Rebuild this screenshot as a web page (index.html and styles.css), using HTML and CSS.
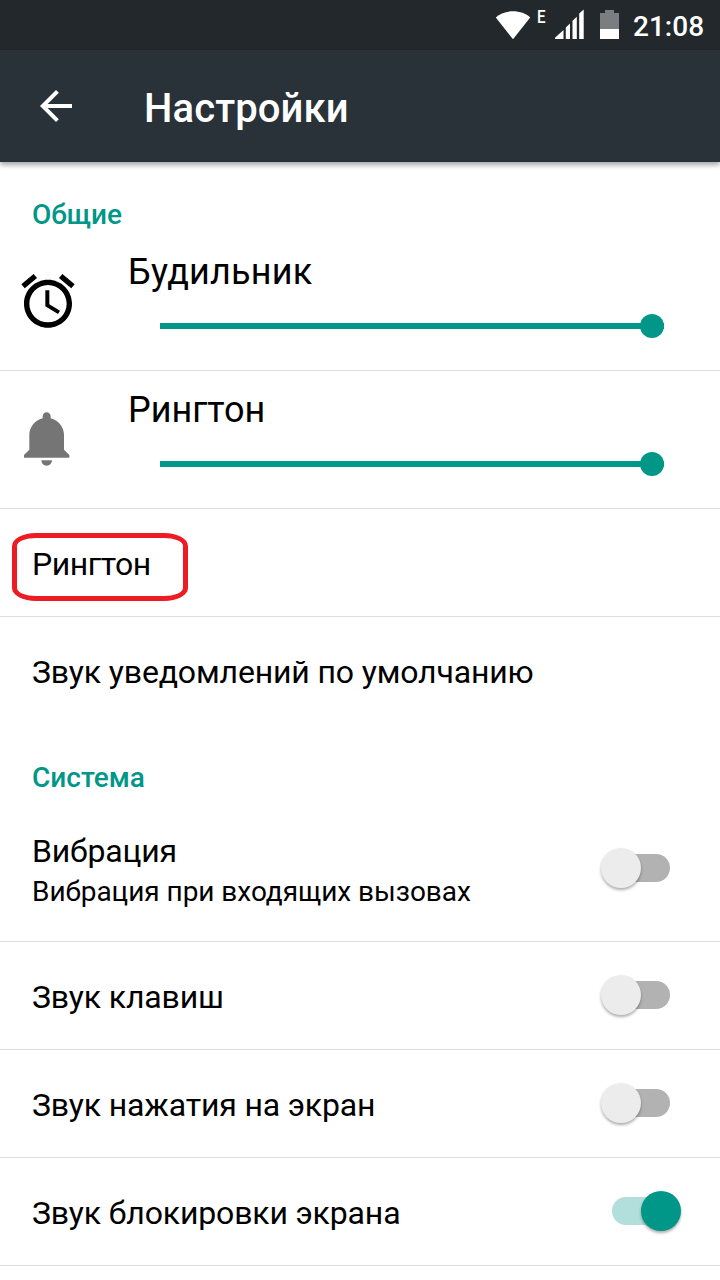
FILE: index.html
```html
<!DOCTYPE html>
<html lang="ru">
<head>
<meta charset="utf-8">
<title>Настройки</title>
<link rel="stylesheet" href="styles.css">
</head>
<body>
<div class="status-bar">
  <svg class="status-icons" viewBox="0 0 130 50" fill="#fff">
    <path d="M5.800 17.500C14 9.200 32 9.200 40.200 17.500L23 39.200Z"/>
    <path d="M65 39V37.800L73.500 30V39ZM75.800 39V27.500L80 23.500V39ZM82.500 39V20.800L86.800 16.800V39ZM89.200 39V13.500L93.700 9.500V39Z"/>
    <path d="M110 13H115V10H124V13H129V29H110Z" fill="#7b7e80"/>
    <path d="M110 29H129V39H110Z"/>
  </svg>
  <span class="network">E</span>
  <span class="clock">21:08</span>
</div>
<header class="app-bar">
  <svg class="back" viewBox="0 0 24 24"><path d="M20 11H7.830l5.590-5.590L12 4l-8 8 8 8 1.410-1.410L7.830 13H20v-2z"/></svg>
  <h1 class="title">Настройки</h1>
</header>
<main>
  <h2 class="section">Общие</h2>
  <div class="row volume">
    <svg class="volume-icon" viewBox="0 0 24 24"><path d="M22 5.720l-4.600-3.860-1.290 1.530 4.600 3.860L22 5.720zM7.880 3.390L6.600 1.860 2 5.710l1.290 1.530 4.590-3.850zM12.500 8H11v6l4.750 2.850.75-1.230-4-2.370V8zM12 4c-4.970 0-9 4.030-9 9s4.020 9 9 9c4.970 0 9-4.030 9-9s-4.030-9-9-9zm0 16c-3.870 0-7-3.130-7-7s3.130-7 7-7 7 3.130 7 7-3.130 7-7 7z"/></svg>
    <div class="volume-body"><div class="volume-name wide">Будильник</div><div class="slider"><i class="knob"></i></div></div>
  </div>
  <div class="row volume">
    <svg class="volume-icon muted" viewBox="0 0 24 24"><path d="M11.500 22c1.100 0 2-.9 2-2h-4c0 1.100.9 2 2 2zm6.500-6v-5.500c0-3.070-2.130-5.640-5-6.320V3.500c0-.83-.67-1.500-1.500-1.500S10 2.670 10 3.500v.68c-2.870.68-5 3.250-5 6.320V16l-2 2v1h17v-1l-2-2z"/></svg>
    <div class="volume-body"><div class="volume-name">Рингтон</div><div class="slider"><i class="knob"></i></div></div>
  </div>
  <div class="row item marked"><span class="label">Рингтон</span></div>
  <div class="row item last"><span class="label">Звук уведомлений по умолчанию</span></div>
  <h2 class="section system">Система</h2>
  <div class="row item detailed">
    <div class="texts"><div class="label">Вибрация</div><div class="hint">Вибрация при входящих вызовах</div></div>
    <div class="switch"><i class="thumb"></i></div>
  </div>
  <div class="row item"><span class="label">Звук клавиш</span><div class="switch"><i class="thumb"></i></div></div>
  <div class="row item"><span class="label">Звук нажатия на экран</span><div class="switch"><i class="thumb"></i></div></div>
  <div class="row item"><span class="label">Звук блокировки экрана</span><div class="switch on"><i class="thumb"></i></div></div>
</main>
</body>
</html>
```

FILE: styles.css
```css
*, *::after { box-sizing: border-box; }
body {
  margin: 0;
  height: 1280px;
  overflow: hidden;
  background: #fff;
  color: #000;
  font-family: Roboto, "Noto Sans", sans-serif;
}
h1, h2 { margin: 0; font-weight: 500; }
.status-bar {
  position: relative;
  display: flex;
  justify-content: flex-end;
  height: 50px;
  padding-right: 16px;
  background: #22282c;
  color: #fff;
}
.status-icons { width: 130px; height: 50px; margin-right: 13px; }
.network { position: absolute; left: 537px; top: 6px; font-size: 19px; font-weight: 500; line-height: 22px; transform: scaleX(.8); transform-origin: 0 0; }
.clock { width: 71px; font-size: 28px; font-weight: 500; line-height: 53px; text-align: right; white-space: nowrap; }
.app-bar {
  position: relative;
  display: flex;
  align-items: center;
  height: 112px;
  padding-left: 32px;
  background: #283238;
  color: #fff;
  box-shadow: 0 3px 5px rgba(0, 0, 0, .35);
}
.back { width: 48px; height: 48px; fill: #fff; }
.title { padding: 6px 0 0 64px; font-size: 40px; line-height: 48px; letter-spacing: .12px; }
.section {
  height: 71px;
  padding: 35px 32px 0;
  color: #009688;
  font-size: 28px;
  line-height: 36px;
}
.system { height: 88px; }
.row { display: flex; border-bottom: 1px solid #dedede; }
.volume { height: 138px; padding: 36px 56px 0 16px; }
.volume-icon { flex: none; width: 64px; height: 64px; }
.muted { fill: #757575; }
.volume-body { flex: 1; margin: -20px 0 0 48px; }
.volume-name { font-size: 36px; line-height: 46px; }
.wide { letter-spacing: .2px; }
.slider {
  display: flex;
  justify-content: flex-end;
  align-items: center;
  height: 6px;
  margin: 28px 0 0 32px;
  background: #009688;
}
.knob { width: 24px; height: 24px; border-radius: 50%; background: #009688; }
.item {
  position: relative;
  height: 108px;
  align-items: center;
  justify-content: space-between;
  padding: 0 50px 2px 32px;
}
.label { padding-top: 5px; font-size: 32px; line-height: 40px; letter-spacing: -.15px; }
.hint { padding-top: 3px; font-size: 28px; line-height: 36px; letter-spacing: -.04px; }
.marked .label { letter-spacing: -.45px; }
.last { padding-bottom: 3px; border-bottom: 0; }
.detailed { height: 129px; align-items: flex-start; }
.texts { padding-top: 13px; }
.detailed .switch { margin-top: 41px; }
.marked::after {
  content: "";
  position: absolute;
  left: 12px;
  top: 24px;
  width: 176px;
  height: 68px;
  border: 5px solid #ed1c24;
  border-radius: 24px / 13px;
}
.switch {
  display: flex;
  align-items: center;
  width: 58px;
  height: 28px;
  border-radius: 14px;
  background: #b2b2b2;
}
.thumb {
  flex: none;
  width: 40px;
  height: 40px;
  margin-left: -11px;
  border-radius: 50%;
  background: #ececec;
  box-shadow: 0 2px 3px rgba(0, 0, 0, .32);
}
.on { background: #b2dfdb; }
.on .thumb { margin-left: 29px; background: #009688; }
```
